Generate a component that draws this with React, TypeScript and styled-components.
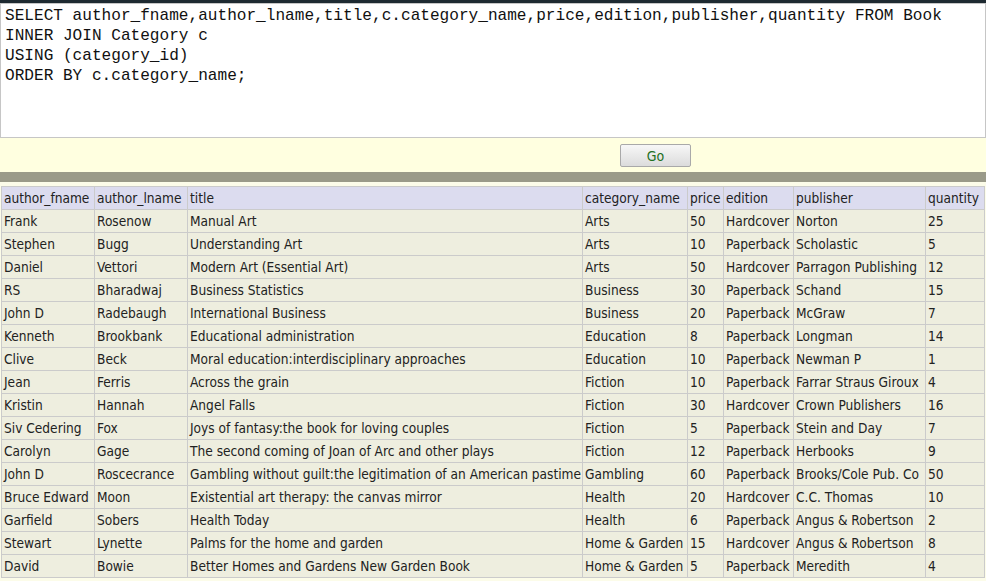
import React from "react";
import styled, { createGlobalStyle } from "styled-components";

const Global = createGlobalStyle`
  html, body { margin: 0; padding: 0; background: #fcfce9; }
  body { font-family: "DejaVu Sans Condensed", "DejaVu Sans", sans-serif; }
`;

const Page = styled.div`
  width: 986px;
  display: flex;
  flex-direction: column;
`;

const TopStrip = styled.div`
  height: 3px;
  background: #1e2a31;
`;

const QueryBox = styled.textarea`
  display: block;
  box-sizing: border-box;
  width: 986px;
  height: 135px;
  margin: 0;
  padding: 2px 4px;
  border: 1px solid #c6c6c6;
  background: #ffffff;
  color: #111111;
  font-family: "Liberation Mono", "DejaVu Sans Mono", monospace;
  font-size: 16.1px;
  line-height: 20px;
  resize: none;
  overflow: hidden;
  white-space: pre;
  outline: none;
`;

const ActionBar = styled.div`
  height: 34px;
  background: #ffffe0;
  display: flex;
  align-items: center;
  padding-left: 620px;
  box-sizing: border-box;
`;

const GoButton = styled.button`
  width: 71px;
  height: 23px;
  margin-top: 1px;
  border: 1px solid #a9a9a9;
  border-radius: 2px;
  background: linear-gradient(#f7f7f7, #dcdcdc);
  color: #23701f;
  font-family: "DejaVu Sans Condensed", "DejaVu Sans", sans-serif;
  font-size: 14px;
  padding: 0;
`;

const Divider = styled.div`
  height: 10px;
  background: #9a9a89;
`;

const Spacer = styled.div`
  height: 4px;
  background: #fcfce9;
`;

const ResultTable = styled.table`
  border-collapse: collapse;
  table-layout: fixed;
  width: 983px;
  margin-left: 1px;
  font-family: "DejaVu Sans Condensed", "DejaVu Sans", sans-serif;
  font-size: 13.6px;
  color: #222222;
`;

const HeadCell = styled.th`
  background: #dcdcef;
  border: 1px solid #cbcbcb;
  height: 22px;
  padding: 0 2px;
  text-align: left;
  font-weight: normal;
  white-space: nowrap;
  overflow: hidden;
`;

const Cell = styled.td`
  background: #eeeedf;
  border: 1px solid #cbcbcb;
  height: 22px;
  padding: 0 2px;
  white-space: nowrap;
  overflow: hidden;
`;

const columns = [
  { key: "author_fname", width: 93 },
  { key: "author_lname", width: 93 },
  { key: "title", width: 395 },
  { key: "category_name", width: 105 },
  { key: "price", width: 36 },
  { key: "edition", width: 70 },
  { key: "publisher", width: 132 },
  { key: "quantity", width: 59 },
];

const rows: string[][] = [
  ["Frank", "Rosenow", "Manual Art", "Arts", "50", "Hardcover", "Norton", "25"],
  ["Stephen", "Bugg", "Understanding Art", "Arts", "10", "Paperback", "Scholastic", "5"],
  ["Daniel", "Vettori", "Modern Art (Essential Art)", "Arts", "50", "Hardcover", "Parragon Publishing", "12"],
  ["RS", "Bharadwaj", "Business Statistics", "Business", "30", "Paperback", "Schand", "15"],
  ["John D", "Radebaugh", "International Business", "Business", "20", "Paperback", "McGraw", "7"],
  ["Kenneth", "Brookbank", "Educational administration", "Education", "8", "Paperback", "Longman", "14"],
  ["Clive", "Beck", "Moral education:interdisciplinary approaches", "Education", "10", "Paperback", "Newman P", "1"],
  ["Jean", "Ferris", "Across the grain", "Fiction", "10", "Paperback", "Farrar Straus Giroux", "4"],
  ["Kristin", "Hannah", "Angel Falls", "Fiction", "30", "Hardcover", "Crown Publishers", "16"],
  ["Siv Cedering", "Fox", "Joys of fantasy:the book for loving couples", "Fiction", "5", "Paperback", "Stein and Day", "7"],
  ["Carolyn", "Gage", "The second coming of Joan of Arc and other plays", "Fiction", "12", "Paperback", "Herbooks", "9"],
  ["John D", "Roscecrance", "Gambling without guilt:the legitimation of an American pastime", "Gambling", "60", "Paperback", "Brooks/Cole Pub. Co", "50"],
  ["Bruce Edward", "Moon", "Existential art therapy: the canvas mirror", "Health", "20", "Hardcover", "C.C. Thomas", "10"],
  ["Garfield", "Sobers", "Health Today", "Health", "6", "Paperback", "Angus & Robertson", "2"],
  ["Stewart", "Lynette", "Palms for the home and garden", "Home & Garden", "15", "Hardcover", "Angus & Robertson", "8"],
  ["David", "Bowie", "Better Homes and Gardens New Garden Book", "Home & Garden", "5", "Paperback", "Meredith", "4"],
];

const query = `SELECT author_fname,author_lname,title,c.category_name,price,edition,publisher,quantity FROM Book
INNER JOIN Category c
USING (category_id)
ORDER BY c.category_name;`;

export default function App() {
  return (
    <Page>
      <Global />
      <TopStrip />
      <QueryBox readOnly value={query} spellCheck={false} />
      <ActionBar>
        <GoButton type="button">Go</GoButton>
      </ActionBar>
      <Divider />
      <Spacer />
      <ResultTable>
        <colgroup>
          {columns.map((c) => (
            <col key={c.key} style={{ width: c.width }} />
          ))}
        </colgroup>
        <thead>
          <tr>
            {columns.map((c) => (
              <HeadCell key={c.key}>{c.key}</HeadCell>
            ))}
          </tr>
        </thead>
        <tbody>
          {rows.map((r, i) => (
            <tr key={i}>
              {r.map((v, j) => (
                <Cell key={j}>{v}</Cell>
              ))}
            </tr>
          ))}
        </tbody>
      </ResultTable>
    </Page>
  );
}
